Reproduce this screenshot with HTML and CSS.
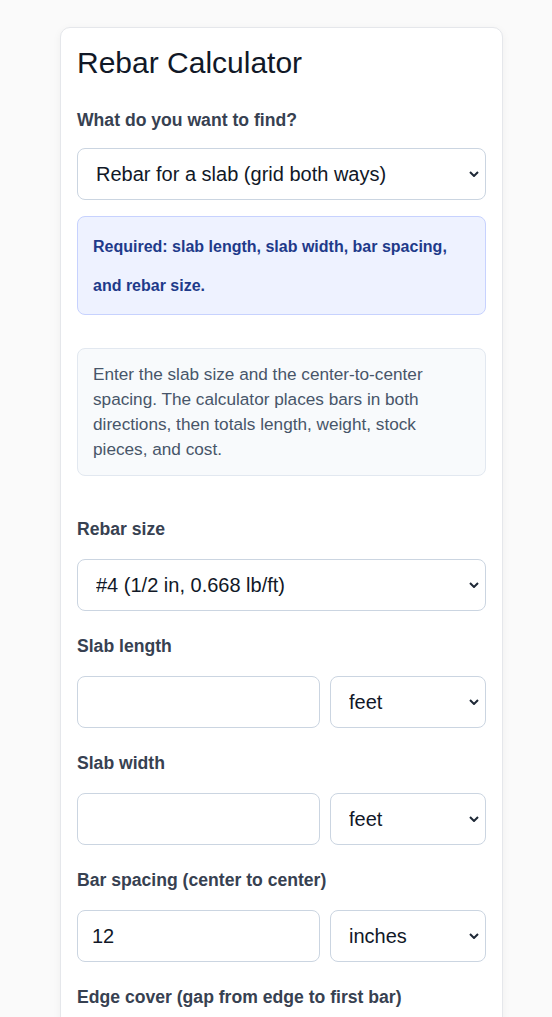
FILE: index.html
```html
<!DOCTYPE html>
<html lang="en">
<head>
    <meta charset="UTF-8">
    <meta name="viewport" content="width=device-width, initial-scale=1.0">
    <title>Rebar Calculator</title>
    <link rel="stylesheet" href="styles.css">
</head>
<body>

    <div class="card">
        <h1>Rebar Calculator</h1>

        <label class="field-label first" for="mode">What do you want to find?</label>
        <select id="mode" class="control">
            <option>Rebar for a slab (grid both ways)</option>
            <option>Rebar for a wall</option>
            <option>Rebar for a footing</option>
        </select>

        <div class="required">
            <strong>Required: slab length, slab width, bar spacing, and rebar size.</strong>
        </div>

        <div class="note">
            Enter the slab size and the center-to-center spacing. The calculator places bars in both directions, then totals length, weight, stock pieces, and cost.
        </div>

        <!-- Campos do calculo -->
        <div class="field first-field">
            <label class="field-label" for="size">Rebar size</label>
            <select id="size" class="control">
                <option>#4 (1/2 in, 0.668 lb/ft)</option>
                <option>#3 (3/8 in, 0.376 lb/ft)</option>
                <option>#5 (5/8 in, 1.043 lb/ft)</option>
            </select>
        </div>

        <div class="field">
            <label class="field-label" for="length">Slab length</label>
            <div class="pair">
                <input type="text" id="length" class="control">
                <select class="control">
                    <option>feet</option>
                    <option>meters</option>
                </select>
            </div>
        </div>

        <div class="field">
            <label class="field-label" for="width">Slab width</label>
            <div class="pair">
                <input type="text" id="width" class="control">
                <select class="control">
                    <option>feet</option>
                    <option>meters</option>
                </select>
            </div>
        </div>

        <div class="field">
            <label class="field-label" for="spacing">Bar spacing (center to center)</label>
            <div class="pair">
                <input type="text" id="spacing" class="control" value="12">
                <select class="control">
                    <option>inches</option>
                    <option>cm</option>
                </select>
            </div>
        </div>

        <div class="field">
            <label class="field-label" for="cover">Edge cover (gap from edge to first bar)</label>
            <div class="pair">
                <input type="text" id="cover" class="control" value="3">
                <select class="control">
                    <option>inches</option>
                    <option>cm</option>
                </select>
            </div>
        </div>
    </div>

</body>
</html>
```

FILE: styles.css
```css
body {
    font-family: "Liberation Sans", Arial, sans-serif;
    margin: 0;
    padding: 27px 0 40px 60px;
    background-color: #fafafa;
    color: #111827;
}
.card {
    width: 409px;
    padding: 0 16px 16px;
    background-color: #fff;
    border: 1px solid #e5e7eb;
    border-radius: 10px;
    box-shadow: 0 2px 8px rgba(0, 0, 0, 0.05);
}
h1 {
    font-size: 30px;
    font-weight: normal;
    margin: 0;
    padding: 18px 0 0;
    line-height: 34px;
}
.field-label {
    display: block;
    font-size: 17.6px;
    font-weight: bold;
    color: #374151;
    line-height: 22px;
}
.field-label.first {
    margin-top: 29px;
    margin-bottom: 17px;
}
.control {
    box-sizing: border-box;
    display: block;
    width: 100%;
    height: 52px;
    padding: 0 14px;
    font-family: inherit;
    font-size: 20px;
    color: #111827;
    background-color: #fff;
    border: 1px solid #cbd5e1;
    border-radius: 8px;
}
select.control {
    -webkit-appearance: none;
    appearance: none;
    padding-left: 18px;
    padding-right: 24px;
    background-image: url("data:image/svg+xml,%3Csvg xmlns='http://www.w3.org/2000/svg' width='10' height='6' viewBox='0 0 10 6'%3E%3Cpath d='M1 1l4 4 4-4' fill='none' stroke='%231f2937' stroke-width='2'/%3E%3C/svg%3E");
    background-repeat: no-repeat;
    background-position: right 6px center;
    background-size: 10px 6px;
}
.required {
    margin-top: 16px;
    padding: 10px 15px 9px;
    background-color: #eef2ff;
    border: 1px solid #c7d2fe;
    border-radius: 8px;
    color: #1e3a8a;
    font-size: 16px;
    line-height: 39px;
}
.note {
    margin-top: 33px;
    padding: 13px 15px;
    background-color: #f8fafc;
    border: 1px solid #e2e8f0;
    border-radius: 8px;
    color: #475569;
    font-size: 17.2px;
    line-height: 25px;
}
.field {
    margin-top: 24px;
}
.field.first-field {
    margin-top: 42px;
}
.field .field-label {
    margin-bottom: 19px;
}
.pair {
    display: grid;
    grid-template-columns: 1fr 156px;
    gap: 10px;
}
```
